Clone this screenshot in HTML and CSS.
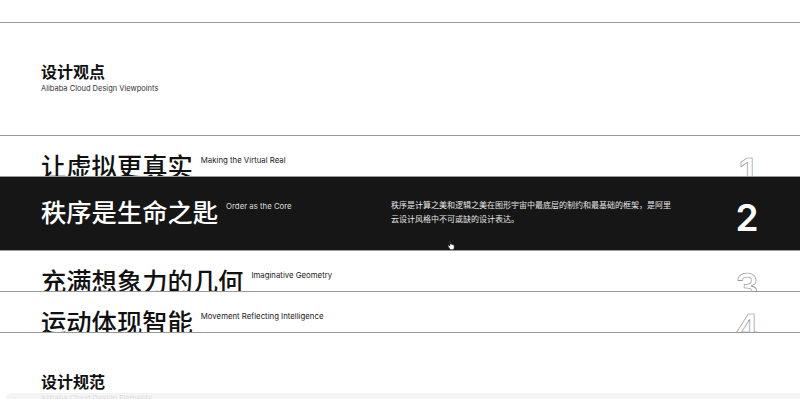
FILE: index.html
```html
<!DOCTYPE html>
<html lang="zh-CN">
<head>
<meta charset="utf-8">
<title>设计观点</title>
<link rel="stylesheet" href="styles.css">
</head>
<body>
<div class="page">
  <section class="sec sec-first">
    <header class="sec-head">
      <h2 class="sec-title">设计观点</h2>
      <p class="sec-sub">Alibaba Cloud Design Viewpoints</p>
    </header>
    <ul class="rows">
      <li class="row">
        <div class="row-name"><span class="row-title">让虚拟更真实</span><span class="row-en">Making the Virtual Real</span></div>
        <p class="row-desc"></p>
        <span class="row-num">1</span>
      </li>
      <li class="row row-active">
        <div class="row-name"><span class="row-title">秩序是生命之匙</span><span class="row-en">Order as the Core</span></div>
        <p class="row-desc">秩序是计算之美和逻辑之美在图形宇宙中最底层的制约和最基础的框架，是阿里云设计风格中不可或缺的设计表达。</p>
        <span class="row-num">2</span>
        <svg class="cursor" viewBox="0 0 12 14" width="9" height="11" aria-hidden="true">
          <path d="M3.5 1.2c.6 0 1 .4 1 1V6.4l.2-.1c.5-.3 1.1-.1 1.3.3.5-.3 1.1-.1 1.3.4.5-.2 1.1 0 1.3.5l.1.3c.5-.1 1 .2 1 .8v2.6c0 1.6-1.3 2.9-2.9 2.9H5.6c-.9 0-1.6-.4-2.1-1.1L1.3 9.4c-.3-.5-.2-1.1.3-1.4.4-.3 1-.2 1.3.2l.6.8V2.2c0-.6.4-1 1-1z" fill="#fff" stroke="#000" stroke-width="0.9"/>
        </svg>
      </li>
      <li class="row">
        <div class="row-name"><span class="row-title">充满想象力的几何</span><span class="row-en">Imaginative Geometry</span></div>
        <p class="row-desc"></p>
        <span class="row-num">3</span>
      </li>
      <li class="row">
        <div class="row-name"><span class="row-title">运动体现智能</span><span class="row-en">Movement Reflecting Intelligence</span></div>
        <p class="row-desc"></p>
        <span class="row-num">4</span>
      </li>
    </ul>
  </section>
  <section class="sec">
    <header class="sec-head">
      <h2 class="sec-title">设计规范</h2>
      <p class="sec-sub">Alibaba Cloud Design Elements</p>
    </header>
  </section>
</div>
<div class="bottom-bar"></div>
</body>
</html>
```

FILE: styles.css
```css
* { box-sizing: border-box; }
html, body { margin: 0; padding: 0; background: #fff; }
body {
  font-family: Inter, "Noto Sans CJK SC", sans-serif;
  color: #111;
}
.page { padding-top: 22px; }
.sec-first { border-top: 1px solid #999; }
.sec-head {
  height: 112px;
  padding: 40px 41px 0;
}
.sec-title {
  margin: 0;
  font-family: "Noto Sans CJK SC", sans-serif;
  font-size: 16px;
  line-height: 1;
  font-weight: 700;
  color: #111;
}
.sec-sub {
  margin: 6px 0 0;
  font-family: Inter, sans-serif;
  font-size: 7.5px;
  line-height: 1;
  color: #333;
}
.rows {
  list-style: none;
  margin: 0;
  padding: 0;
  border-bottom: 1px solid #999;
}
.row {
  position: relative;
  height: 41px;
  overflow: hidden;
  border-top: 1px solid #999;
  display: grid;
  grid-template-columns: 350px 280px 1fr 30px;
  align-items: start;
  padding: 17px 38px 0 41px;
  background: #fff;
}
.row-active {
  height: 74px;
  background: #161616;
  padding-top: 22px;
  color: #fff;
}
.row-name { display: flex; align-items: flex-start; }
.row-title {
  font-family: "Noto Sans CJK SC", sans-serif;
  font-size: 25.3px;
  line-height: 1;
  font-weight: 500;
  white-space: nowrap;
}
.row-en {
  margin: 4px 0 0 8px;
  font-family: Inter, sans-serif;
  font-size: 7.8px;
  line-height: 1;
  color: #222;
  white-space: nowrap;
}
.row-active .row-en { color: #ddd; }
.row-desc {
  grid-column: 2;
  margin: -1px 0 0;
  font-family: "Noto Sans CJK SC", sans-serif;
  font-size: 8px;
  line-height: 13.5px;
  color: #e6e6e6;
}
.row-num {
  grid-column: 4;
  text-align: center;
  font-family: Inter, sans-serif;
  font-size: 37px;
  font-weight: 600;
  line-height: 1;
  color: transparent;
  -webkit-text-stroke: 0.6px #888;
}
.row-active .row-num {
  color: #fff;
  -webkit-text-stroke: 0;
}
.cursor {
  position: absolute;
  left: 447px;
  top: 62px;
}
.bottom-bar {
  position: fixed;
  left: 6px;
  right: 0;
  bottom: 0;
  height: 6px;
  background: rgba(242, 242, 242, 0.88);
  border-top-left-radius: 6px;
}
```
